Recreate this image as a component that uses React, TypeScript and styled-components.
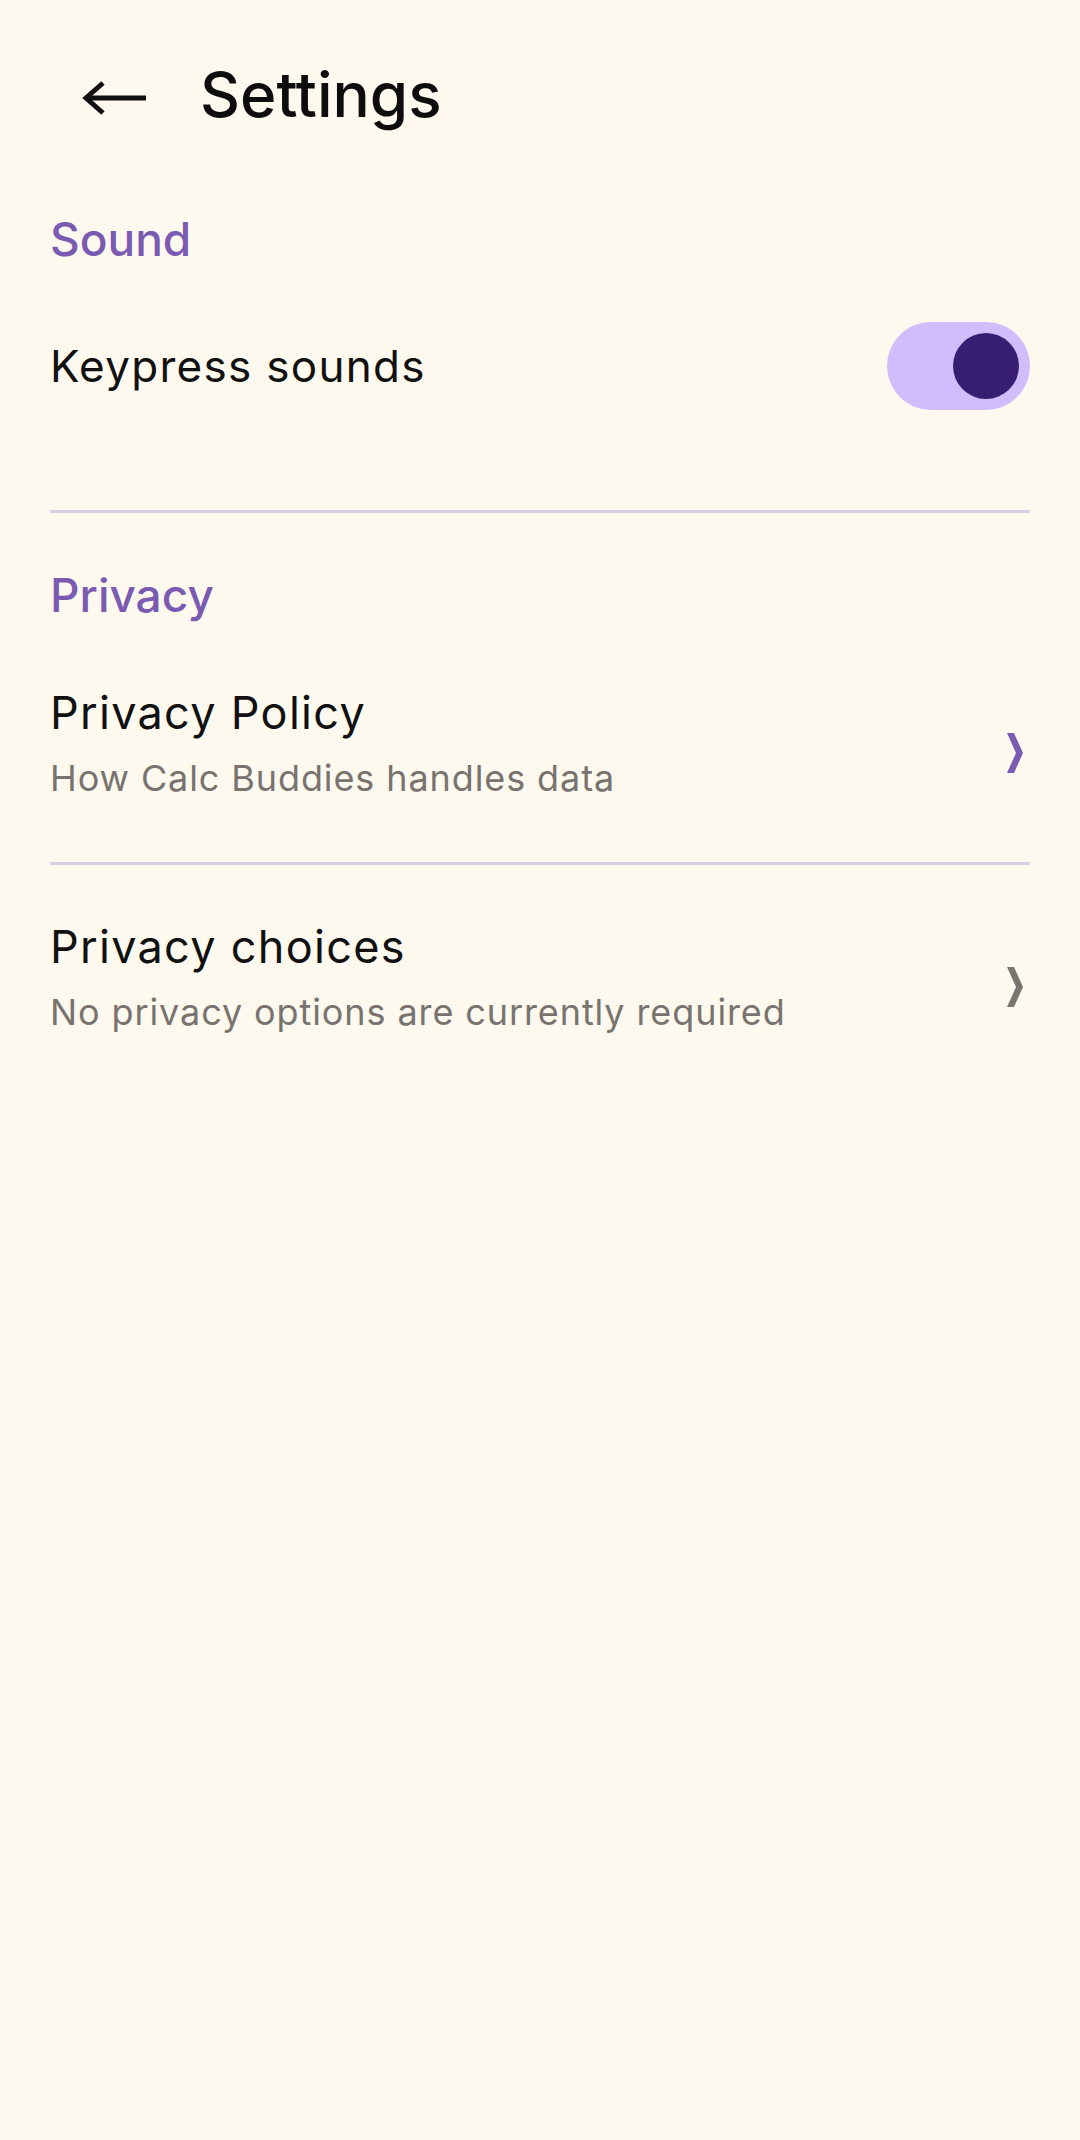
import React from "react";
import styled, { createGlobalStyle } from "styled-components";

const Global = createGlobalStyle`
  html, body {
    margin: 0;
    padding: 0;
    background: #fef9ef;
  }
  body {
    font-family: Inter, "Noto Sans", sans-serif;
    color: #111111;
    -webkit-font-smoothing: antialiased;
  }
`;

const Page = styled.div`
  min-height: 2140px;
  background: #fef9ef;
  display: flex;
  flex-direction: column;
`;

const TopBar = styled.header`
  height: 196px;
  display: flex;
  align-items: center;
  padding-left: 82px;
`;

const BackButton = styled.button`
  border: none;
  background: transparent;
  padding: 0;
  margin: 0;
  display: flex;
  align-items: center;
  cursor: pointer;
`;

const Title = styled.h1`
  margin: 0 0 6px 54px;
  font-size: 62px;
  font-weight: 500;
  line-height: 62px;
  color: #0d0d0d;
`;

const Content = styled.main`
  padding: 0 50px;
  display: flex;
  flex-direction: column;
`;

const SectionHeader = styled.h2<{ $top: number; $bottom: number }>`
  margin: ${(p) => p.$top}px 0 ${(p) => p.$bottom}px 0;
  font-size: 46px;
  line-height: 56px;
  font-weight: 500;
  color: #7b5bb2;
`;

const ToggleRow = styled.div`
  display: flex;
  align-items: center;
  justify-content: space-between;
  padding: 40px 0 100px 0;
`;

const RowLabel = styled.span`
  font-size: 44px;
  line-height: 88px;
  letter-spacing: 1.3px;
  color: #111111;
`;

const Track = styled.div<{ $on: boolean }>`
  width: 143px;
  height: 88px;
  border-radius: 44px;
  background: ${(p) => (p.$on ? "#d1bdfc" : "#e7e0ec")};
  display: flex;
  align-items: center;
  justify-content: ${(p) => (p.$on ? "flex-end" : "flex-start")};
  padding: 0 11px;
  box-sizing: border-box;
`;

const Thumb = styled.div`
  width: 66px;
  height: 66px;
  border-radius: 50%;
  background: #381e72;
`;

const Divider = styled.hr`
  margin: 0;
  border: none;
  height: 3px;
  background: #d9d0e2;
`;

const NavItem = styled.div<{ $pt: number }>`
  display: flex;
  align-items: center;
  justify-content: space-between;
  padding: ${(p) => p.$pt}px 0 62px 0;
`;

const TextBlock = styled.div`
  display: flex;
  flex-direction: column;
`;

const ItemTitle = styled.span`
  font-size: 45px;
  line-height: 56px;
  letter-spacing: 1.3px;
  color: #111111;
`;

const ItemSubtitle = styled.span`
  margin-top: 15px;
  font-size: 36px;
  line-height: 44px;
  letter-spacing: 0.9px;
  color: #78736e;
`;

const Chevron = styled.svg`
  margin-top: 20px;
  margin-right: 7px;
  flex-shrink: 0;
`;

const ChevronIcon = ({ color }: { color: string }) => (
  <Chevron width="16" height="40" viewBox="0 0 16 40">
    <polygon points="0,0 7,0 16,20 7,40 0,40 9,20" fill={color} />
  </Chevron>
);

const ArrowBack = () => (
  <svg width="64" height="34" viewBox="0 0 64 34">
    <path d="M4 17 H64" stroke="#111" strokeWidth="5" fill="none" />
    <path d="M21 2 L4 17 L21 32" stroke="#111" strokeWidth="5" fill="none" strokeLinejoin="miter" />
  </svg>
);

export default function App() {
  return (
    <Page>
      <Global />
      <TopBar>
        <BackButton aria-label="Back">
          <ArrowBack />
        </BackButton>
        <Title>Settings</Title>
      </TopBar>
      <Content>
        <SectionHeader $top={15} $bottom={15}>Sound</SectionHeader>
        <ToggleRow>
          <RowLabel>Keypress sounds</RowLabel>
          <Track $on={true}>
            <Thumb />
          </Track>
        </ToggleRow>
        <Divider />
        <SectionHeader $top={54} $bottom={8}>Privacy</SectionHeader>
        <NavItem $pt={54}>
          <TextBlock>
            <ItemTitle>Privacy Policy</ItemTitle>
            <ItemSubtitle>How Calc Buddies handles data</ItemSubtitle>
          </TextBlock>
          <ChevronIcon color="#7b5bb2" />
        </NavItem>
        <Divider />
        <NavItem $pt={54}>
          <TextBlock>
            <ItemTitle>Privacy choices</ItemTitle>
            <ItemSubtitle>No privacy options are currently required</ItemSubtitle>
          </TextBlock>
          <ChevronIcon color="#7a7571" />
        </NavItem>
      </Content>
    </Page>
  );
}
